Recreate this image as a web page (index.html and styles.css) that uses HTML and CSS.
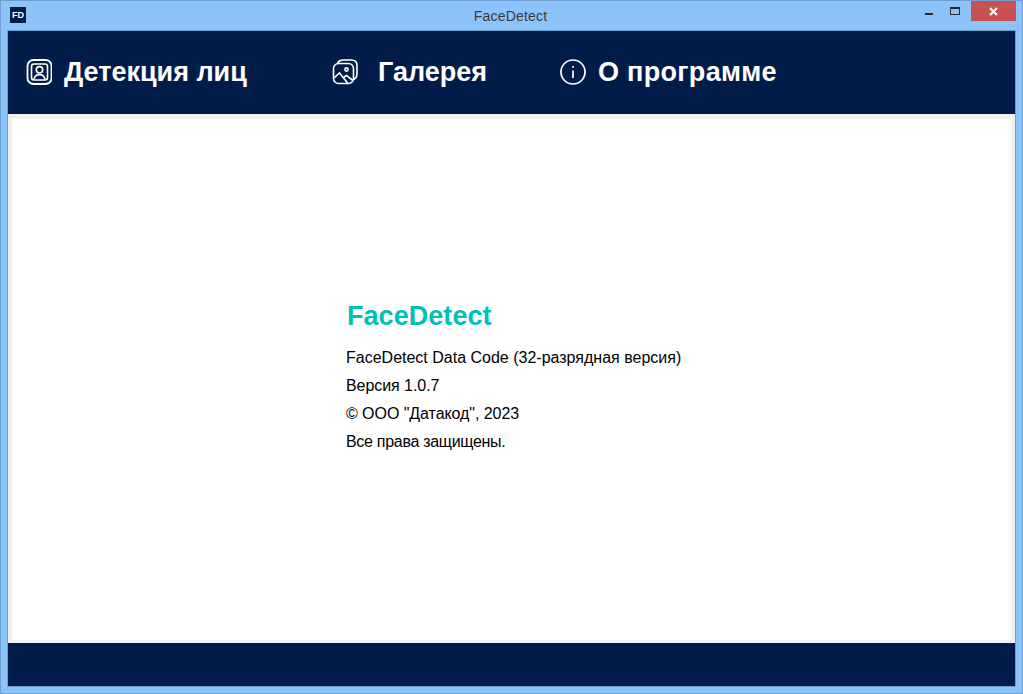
FILE: index.html
```html
<!DOCTYPE html>
<html lang="ru">
<head>
<meta charset="utf-8">
<title>FaceDetect</title>
<link rel="stylesheet" href="styles.css">
</head>
<body>
<div class="window">
  <div class="titlebar">
    <div class="app-icon">FD</div>
    <div class="title">FaceDetect</div>
    <div class="controls">
      <div class="ctl ctl-min"><span class="min-glyph"></span></div>
      <div class="ctl ctl-max"><span class="max-glyph"></span></div>
      <div class="ctl-close">
        <svg width="9" height="9" viewBox="0 0 9 9"><path d="M1 1 L8 8 M8 1 L1 8" stroke="#fff" stroke-width="2.2" fill="none"/></svg>
      </div>
    </div>
  </div>
  <div class="client">
    <nav class="nav">
      <a class="tab tab-face">
        <svg class="tab-icon" width="26" height="26" viewBox="0 0 26 26" fill="none" stroke="#fff">
          <rect x="1.5" y="1" width="24" height="24" rx="6" stroke-width="1.8"/>
          <rect x="5.5" y="5" width="16" height="16" rx="2.5" stroke-width="1.6"/>
          <circle cx="13.5" cy="10.8" r="3.2" stroke-width="1.6"/>
          <path d="M8 20.5 C8.5 17 10.5 15.6 13.5 15.6 C16.5 15.6 18.5 17 19 20.5" stroke-width="1.6"/>
        </svg>
        <span class="tab-label">Детекция лиц</span>
      </a>
      <a class="tab tab-gallery">
        <svg class="tab-icon" width="26" height="26" viewBox="0 0 26 26" fill="none" stroke="#fff" stroke-width="1.6">
          <path d="M5.5 4 C6.5 2 8.5 1 11 1 H19.5 C23 1 25 3 25 6.5 V14.5 C25 17.5 24 19.5 21.5 20.5"/>
          <rect x="1.5" y="4.5" width="20" height="20" rx="5"/>
          <circle cx="14.5" cy="10.5" r="1.6"/>
          <path d="M2 19 L7.5 14 L16 24.5 M11.5 18.5 L14.5 16.5 L21 21.5"/>
        </svg>
        <span class="tab-label">Галерея</span>
      </a>
      <a class="tab tab-about">
        <svg class="tab-icon" width="26" height="26" viewBox="0 0 26 26" fill="none" stroke="#fff">
          <circle cx="13" cy="13" r="12" stroke-width="1.7"/>
          <path d="M13 11.5 V19" stroke-width="1.7"/>
          <path d="M13 7 V8.8" stroke-width="1.7"/>
        </svg>
        <span class="tab-label">О программе</span>
      </a>
    </nav>
    <main class="content">
      <section class="about">
        <h1 class="about-title">FaceDetect</h1>
        <p class="about-line">FaceDetect Data Code (32-разрядная версия)</p>
        <p class="about-line about-line-tight">Версия 1.0.7</p>
        <p class="about-line about-line-tight">© ООО "Датакод", 2023</p>
        <p class="about-line about-line-last">Все права защищены.</p>
      </section>
    </main>
    <footer class="footer"></footer>
  </div>
</div>
</body>
</html>
```
FILE: styles.css
```css
* { box-sizing: border-box; }
html, body { margin: 0; padding: 0; }
body { width: 1023px; height: 694px; overflow: hidden; font-family: "Liberation Sans", Arial, sans-serif; }

.window {
  width: 1023px;
  height: 694px;
  background: #8cc4fa;
  border: 1px solid #6d9fd2;
  display: flex;
  flex-direction: column;
  padding: 0 6px 6px 6px;
}

.titlebar { height: 29px; display: flex; align-items: flex-start; flex: none; position: relative; }
.app-icon {
  width: 16px; height: 16px; margin: 6px 0 0 3px;
  background: #021c4a; color: #fff;
  font-size: 9px; font-weight: bold; line-height: 16px; text-align: center;
}
.title {
  position: absolute; left: 0; right: 2px; top: 6px;
  text-align: center; font-size: 14px; line-height: 18px; color: #3a3a3a; letter-spacing: 0.2px;
}
.controls { margin-left: auto; display: flex; margin-right: 0; }
.ctl { width: 27px; height: 20px; position: relative; }
.ctl-min { width: 26px; }
.min-glyph { position: absolute; left: 7px; top: 12px; width: 8px; height: 2px; background: #2a2a2a; }
.max-glyph { position: absolute; left: 6px; top: 6px; width: 10px; height: 8px; border: 1px solid #2a2a2a; border-top-width: 2px; }
.ctl-close {
  width: 45px; height: 20px;
  background: #c75050;
  display: flex; align-items: center; justify-content: center;
}

.client {
  flex: 1; min-height: 0;
  display: flex; flex-direction: column;
  border: 1px solid #6d9fd2;
  background: #f0f0f0;
}
.nav { height: 83px; flex: none; background: #021c4a; display: flex; align-items: center; padding: 0 0 2px 18px; }
.tab { display: flex; align-items: center; color: #fff; text-decoration: none; }
.tab-icon { display: block; flex: none; }
.tab-face { width: 306px; }
.tab-gallery { width: 228px; }
.tab-label { font-size: 27px; font-weight: bold; line-height: 30px; }
.tab-face .tab-label { margin-left: 12px; }
.tab-gallery .tab-label { margin-left: 20px; }
.tab-about .tab-label { margin-left: 12px; letter-spacing: 0.3px; }

.content {
  flex: 1; min-height: 0;
  margin: 5px 4px 3px 4px;
  background: #fff;
  padding: 181px 0 0 334px;
}
.about-title { margin: 0 0 12px 1px; font-size: 27px; line-height: 32px; font-weight: bold; color: #00bfb8; letter-spacing: 0.05px; }
.about-line { margin: 0; font-size: 16px; line-height: 28px; color: #000; }
.about-line-tight { letter-spacing: -0.06px; }
.about-line-last { letter-spacing: -0.3px; }

.footer { height: 43px; flex: none; background: #021c4a; }
```
